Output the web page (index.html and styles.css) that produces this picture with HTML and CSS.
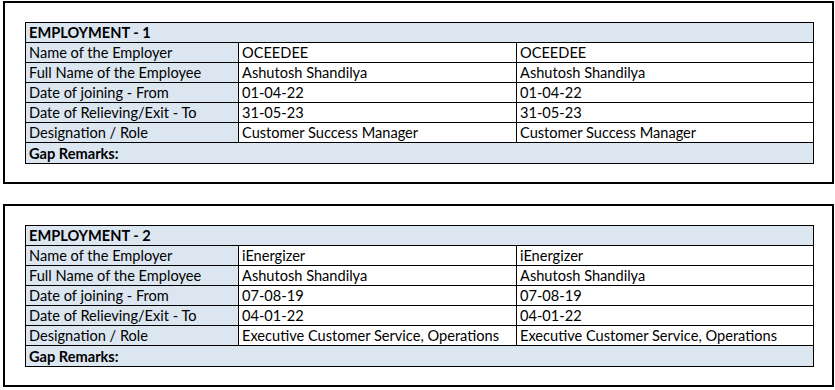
FILE: index.html
```html
<!DOCTYPE html>
<html>
<head>
    <title>Employment Verification</title>
    <link rel="stylesheet" href="styles.css">
</head>
<body>
    <div class="box">
        <table class="emp">
            <colgroup>
                <col class="c1"><col class="c2"><col class="c3">
            </colgroup>
            <tr class="head"><td colspan="3">EMPLOYMENT - 1</td></tr>
            <tr><td class="lbl">Name of the Employer</td><td>OCEEDEE</td><td>OCEEDEE</td></tr>
            <tr><td class="lbl">Full Name of the Employee</td><td>Ashutosh Shandilya</td><td>Ashutosh Shandilya</td></tr>
            <tr><td class="lbl">Date of joining - From</td><td>01-04-22</td><td>01-04-22</td></tr>
            <tr><td class="lbl">Date of Relieving/Exit - To</td><td>31-05-23</td><td>31-05-23</td></tr>
            <tr><td class="lbl">Designation / Role</td><td>Customer Success Manager</td><td>Customer Success Manager</td></tr>
            <tr class="head last"><td colspan="3">Gap Remarks:</td></tr>
        </table>
    </div>

    <div class="box">
        <table class="emp">
            <colgroup>
                <col class="c1"><col class="c2"><col class="c3">
            </colgroup>
            <tr class="head"><td colspan="3">EMPLOYMENT - 2</td></tr>
            <tr><td class="lbl">Name of the Employer</td><td>iEnergizer</td><td>iEnergizer</td></tr>
            <tr><td class="lbl">Full Name of the Employee</td><td>Ashutosh Shandilya</td><td>Ashutosh Shandilya</td></tr>
            <tr><td class="lbl">Date of joining - From</td><td>07-08-19</td><td>07-08-19</td></tr>
            <tr><td class="lbl">Date of Relieving/Exit - To</td><td>04-01-22</td><td>04-01-22</td></tr>
            <tr><td class="lbl">Designation / Role</td><td>Executive Customer Service, Operations</td><td>Executive Customer Service, Operations</td></tr>
            <tr class="head last"><td colspan="3">Gap Remarks:</td></tr>
        </table>
    </div>
</body>
</html>
```

FILE: styles.css
```css
body {
    margin: 0;
    padding-top: 1px;
    background-color: #ffffff;
    font-family: Lato, "Liberation Sans", sans-serif;
    font-size: 14.6px;
    color: #000000;
}
.box {
    box-sizing: border-box;
    width: 831px;
    margin-left: 3px;
    margin-bottom: 20px;
    border: 2px solid #000000;
    padding: 19px 19px 18px 20px;
}
.emp {
    border-collapse: collapse;
    width: 788px;
    table-layout: fixed;
}
.c1 { width: 213px; }
.c2 { width: 278px; }
.c3 { width: 297px; }
.emp td {
    border: 1px solid #000000;
    height: 19px;
    padding: 0 3px;
    line-height: 19px;
    white-space: nowrap;
    overflow: hidden;
    vertical-align: bottom;
}
.emp .lbl {
    background-color: #dce6f1;
}
.emp .head td {
    background-color: #dce6f1;
    font-weight: bold;
}
.emp .last td {
    height: 20px;
}
```
